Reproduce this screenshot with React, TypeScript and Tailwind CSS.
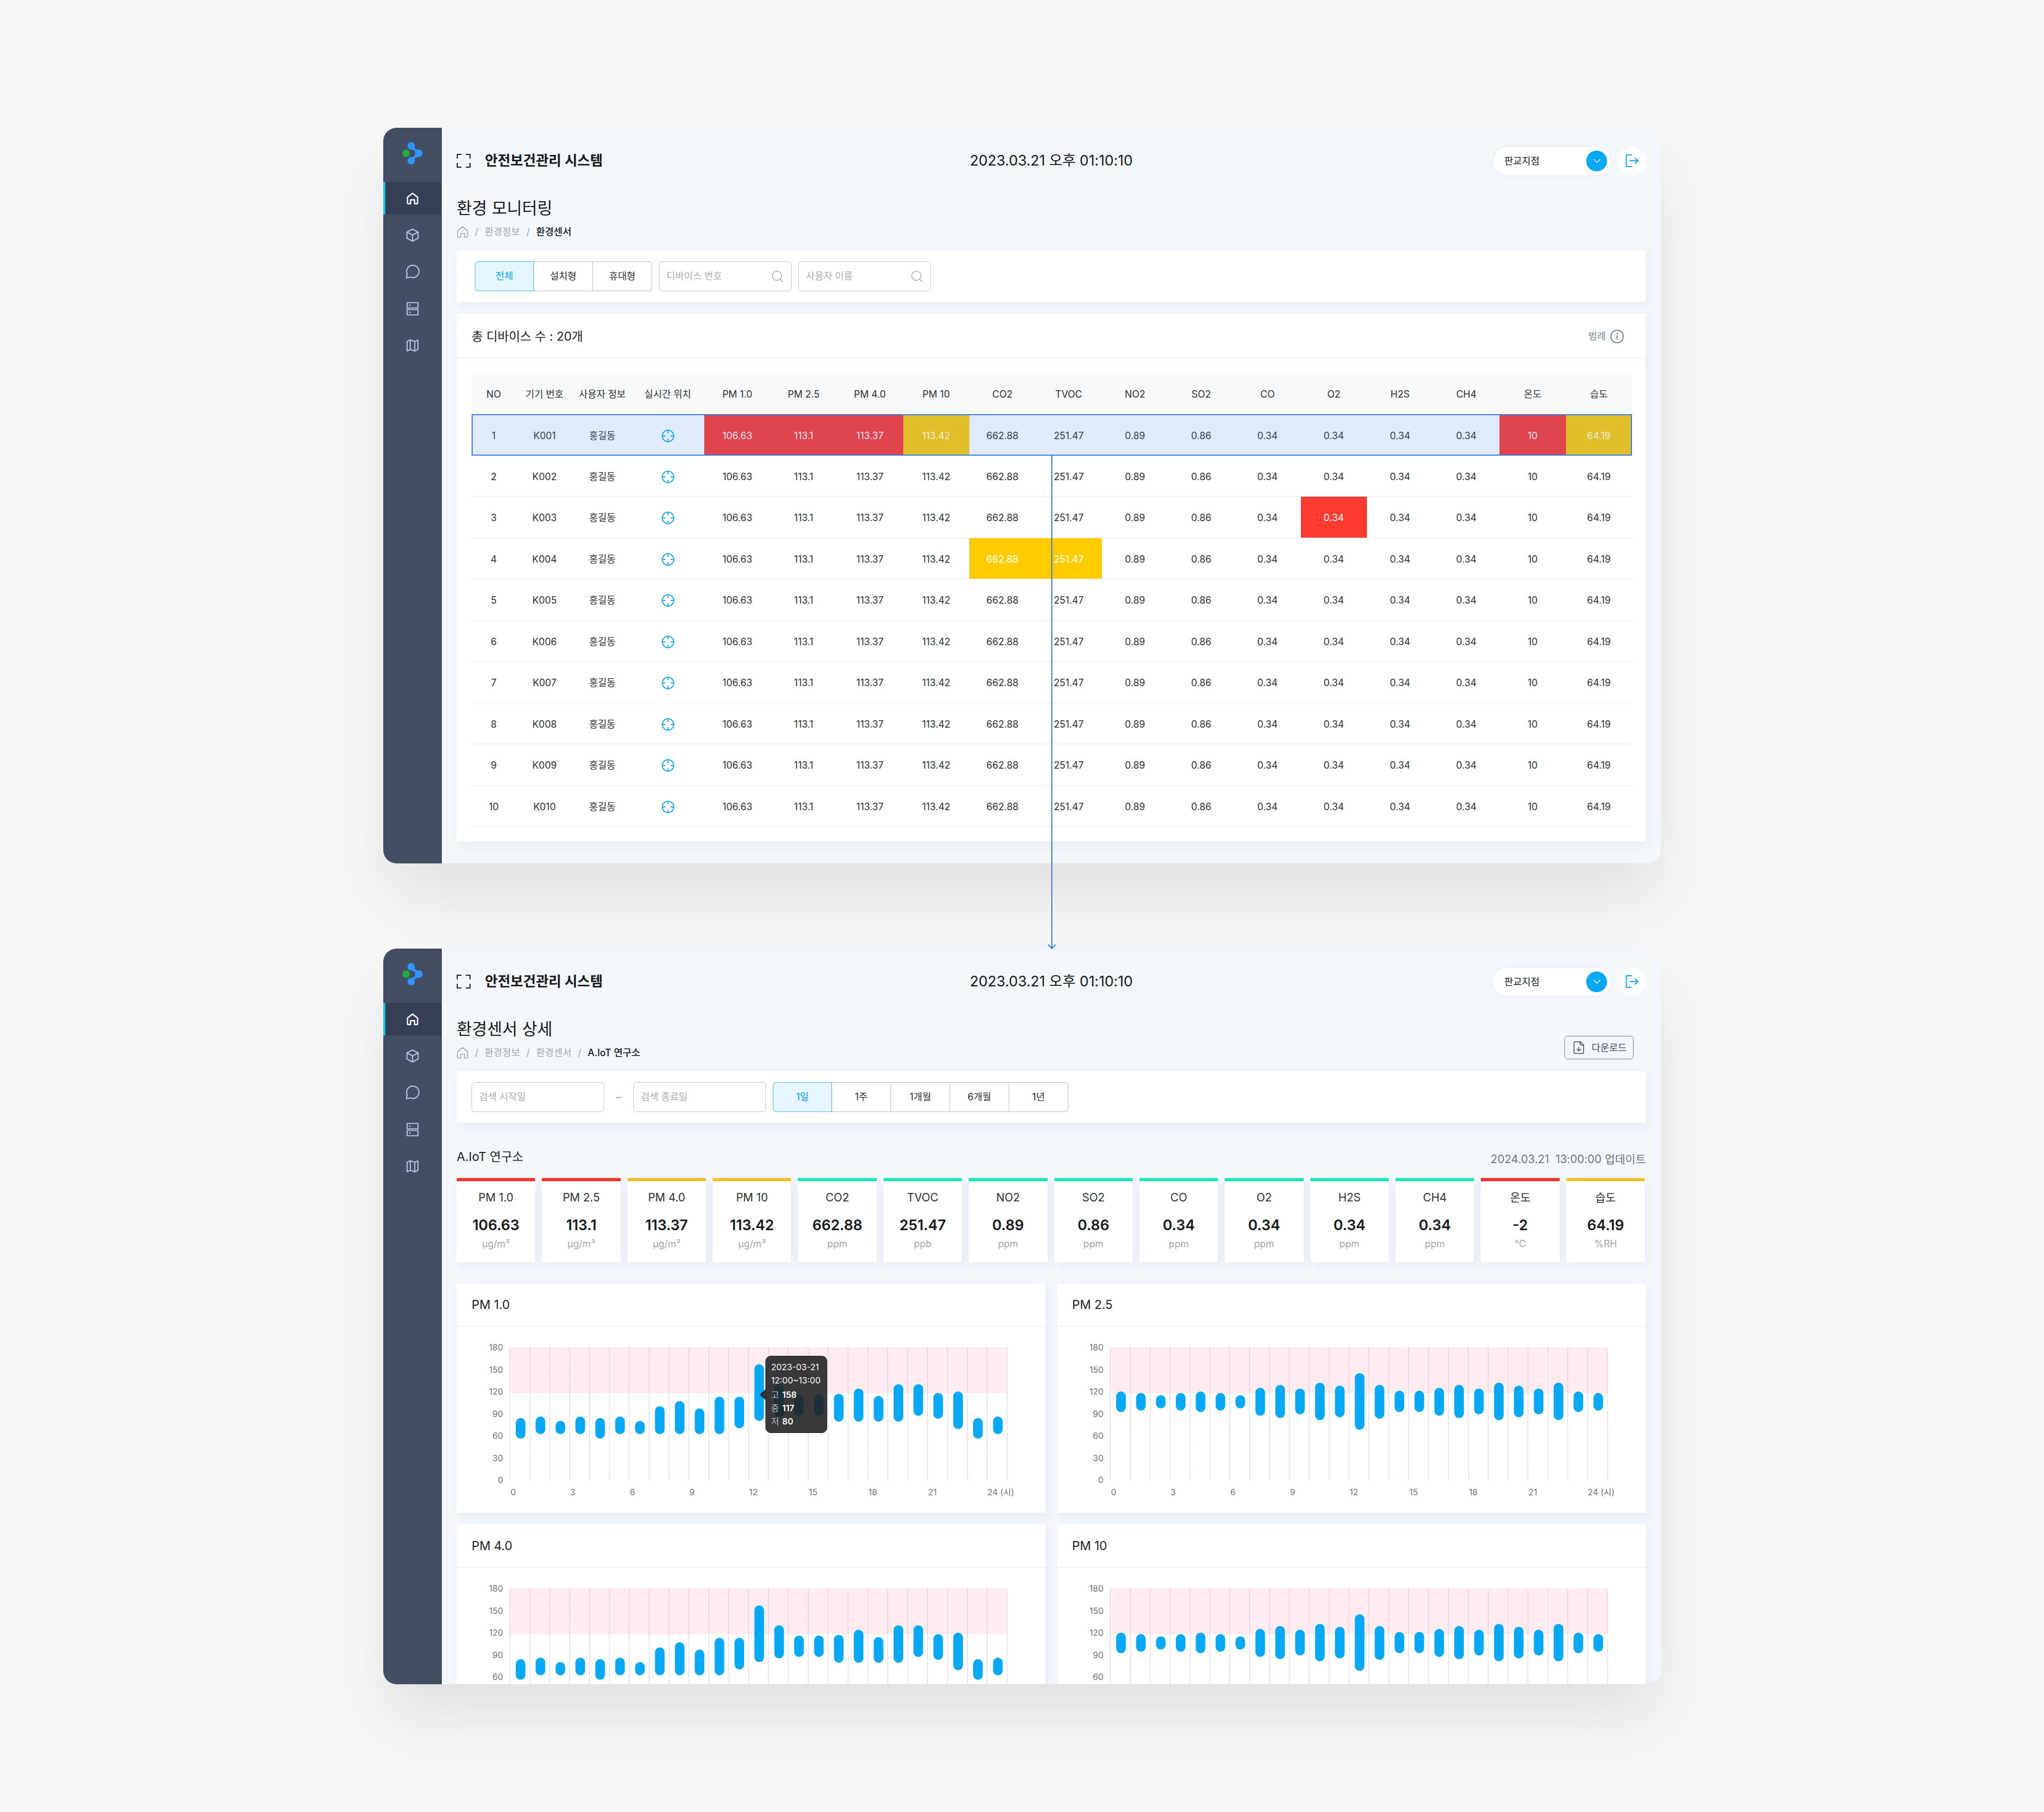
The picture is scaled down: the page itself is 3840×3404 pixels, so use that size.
import type { ReactNode } from 'react';

type Level = 'danger' | 'warn' | 'ok';

const columns = [
  'NO', '기기 번호', '사용자 정보', '실시간 위치', 'PM 1.0', 'PM 2.5', 'PM 4.0', 'PM 10', 'CO2',
  'TVOC', 'NO2', 'SO2', 'CO', 'O2', 'H2S', 'CH4', '온도', '습도',
];

const readings = [
  '106.63', '113.1', '113.37', '113.42', '662.88', '251.47', '0.89', '0.86', '0.34',
  '0.34', '0.34', '0.34', '10', '64.19',
];

const devices = Array.from({ length: 10 }, (_, i) => ({
  no: i + 1,
  id: `K${String(i + 1).padStart(3, '0')}`,
  user: '홍길동',
}));

// Alarm levels keyed by device number, then by index in `readings`.
const alarms: Record<number, Record<number, Level>> = {
  1: { 0: 'danger', 1: 'danger', 2: 'danger', 3: 'warn', 12: 'danger', 13: 'warn' },
  3: { 9: 'danger' },
  4: { 4: 'warn', 5: 'warn' },
};

const sensors: { name: string; value: string; unit: string; level: Level }[] = [
  { name: 'PM 1.0', value: '106.63', unit: 'μg/m³', level: 'danger' },
  { name: 'PM 2.5', value: '113.1', unit: 'μg/m³', level: 'danger' },
  { name: 'PM 4.0', value: '113.37', unit: 'μg/m³', level: 'warn' },
  { name: 'PM 10', value: '113.42', unit: 'μg/m³', level: 'warn' },
  { name: 'CO2', value: '662.88', unit: 'ppm', level: 'ok' },
  { name: 'TVOC', value: '251.47', unit: 'ppb', level: 'ok' },
  { name: 'NO2', value: '0.89', unit: 'ppm', level: 'ok' },
  { name: 'SO2', value: '0.86', unit: 'ppm', level: 'ok' },
  { name: 'CO', value: '0.34', unit: 'ppm', level: 'ok' },
  { name: 'O2', value: '0.34', unit: 'ppm', level: 'ok' },
  { name: 'H2S', value: '0.34', unit: 'ppm', level: 'ok' },
  { name: 'CH4', value: '0.34', unit: 'ppm', level: 'ok' },
  { name: '온도', value: '-2', unit: '℃', level: 'danger' },
  { name: '습도', value: '64.19', unit: '%RH', level: 'warn' },
];

const levelBar: Record<Level, string> = {
  danger: 'border-[#ff3229]',
  warn: 'border-[#f4bf25]',
  ok: 'border-[#17e9b4]',
};

// [high, low] per hour.
const seriesA: [number, number][] = [
  [84, 56], [86, 62], [80, 62], [86, 62], [84, 56], [86, 62], [80, 62], [100, 62], [107, 62],
  [97, 62], [113, 62], [113, 70], [157, 80], [130, 85], [116, 87], [116, 87], [117, 79], [124, 79],
  [114, 79], [130, 79], [130, 87], [118, 83], [120, 69], [84, 56], [86, 62],
];
const seriesB: [number, number][] = [
  [120, 92], [118, 94], [115, 97], [118, 94], [120, 92], [118, 94], [115, 97], [125, 87], [129, 84],
  [124, 89], [132, 81], [128, 85], [145, 68], [129, 83], [121, 92], [121, 92], [125, 87], [129, 84],
  [124, 89], [132, 81], [128, 85], [124, 89], [132, 81], [120, 92], [118, 94],
];

const PLOT_HEIGHT = 249;
const toY = (v: number) => ((180 - v) / 180) * PLOT_HEIGHT;

function Logo() {
  return (
    <svg className="h-11 w-11" viewBox="0 0 44 44" aria-hidden="true">
      <g fill="#3096fb">
        <circle cx="19.5" cy="8" r="7" />
        <circle cx="34" cy="22" r="7" />
        <circle cx="19.5" cy="36" r="7" />
        <path d="M26 10.5C27 14.5 30 15 34 15V29C30 29 27 29.5 26 33.500L17 29.500C23 29.500 27.200 27 27.200 22C27.200 17 23 14.500 17 14.500Z" />
      </g>
      <circle cx="10" cy="22" r="7" fill="#22ad3a" />
    </svg>
  );
}

function HomeIcon({ className, strokeWidth = 2.4 }: { className: string; strokeWidth?: number }) {
  return (
    <svg className={className} viewBox="0 0 30 30" fill="none" stroke="currentColor" strokeWidth={strokeWidth} strokeLinejoin="round" aria-hidden="true">
      <path d="M5.500 12.500 15 5l9.500 7.500v11a1.300 1.300 0 0 1-1.300 1.300h-4.400v-7.300h-7.600v7.300H6.800a1.300 1.300 0 0 1-1.300-1.300Z" />
    </svg>
  );
}

function NavIcon({ children }: { children: ReactNode }) {
  return (
    <svg className="h-[30px] w-[30px]" viewBox="0 0 30 30" fill="none" stroke="currentColor" strokeWidth="2.2" strokeLinejoin="round" strokeLinecap="round" aria-hidden="true">
      {children}
    </svg>
  );
}

const nav: { label: string; icon: ReactNode }[] = [
  { label: '홈', icon: <HomeIcon className="h-[30px] w-[30px]" /> },
  {
    label: '디바이스',
    icon: (
      <NavIcon>
        <path d="M15 3.500 25.500 9v11.500L15 26 4.500 20.500V9ZM4.500 9 15 14.500 25.500 9M15 14.500V26" />
      </NavIcon>
    ),
  },
  {
    label: '메시지',
    icon: (
      <NavIcon>
        <path d="M3.500 26 5 18.800A11.600 11.600 0 1 1 11 24.600Z" />
      </NavIcon>
    ),
  },
  {
    label: '서버',
    icon: (
      <NavIcon>
        <path d="M4.800 3.500h20.500v10H4.800ZM4.800 16.500h20.500v10H4.800Z" />
        <circle cx="9.800" cy="8.500" r="1.500" fill="currentColor" stroke="none" />
        <circle cx="9.800" cy="21.500" r="1.500" fill="currentColor" stroke="none" />
      </NavIcon>
    ),
  },
  {
    label: '지도',
    icon: (
      <NavIcon>
        <path d="M4.800 7.200 10.800 4.500 19.200 7.500 25.200 4.800V22.500L19.200 25.400 10.800 22.500 4.800 25.200ZM10.800 4.500v18M19.200 7.500v17.900" />
      </NavIcon>
    ),
  },
];

function Sidebar() {
  return (
    <nav className="flex w-[110px] shrink-0 flex-col border-r border-[#364058] bg-[#434e65]" aria-label="주 메뉴">
      <a href="#home" aria-label="홈으로" className="flex h-[102px] items-center justify-center pb-[6px]">
        <Logo />
      </a>
      <div className="flex flex-col gap-2">
        {nav.map((item, i) => (
          <a
            key={item.label}
            href="#menu"
            aria-label={item.label}
            className={
              i === 0
                ? 'flex h-[61px] items-center justify-center border-l-4 border-[#16c4ea] bg-[#353f55] pr-1 text-white'
                : 'flex h-[61px] items-center justify-center text-[#b3c0de]'
            }
          >
            {item.icon}
          </a>
        ))}
      </div>
    </nav>
  );
}

function TopBar() {
  return (
    <header className="grid h-[54px] grid-cols-[1fr_auto_1fr] items-center">
      <div className="flex items-center gap-[27px]">
        <button type="button" aria-label="전체 화면">
          <svg className="h-[26px] w-[26px]" viewBox="0 0 26 26" fill="none" stroke="#1d1f23" strokeWidth="2" aria-hidden="true">
            <path d="M1 9V1h8M17 1h8v8M25 17v8h-8M9 25H1v-8" />
          </svg>
        </button>
        <span className="text-[26px] leading-9 font-bold text-[#16181c]">안전보건관리 시스템</span>
      </div>
      <time className="text-[27px] leading-9 text-[#16181c]">2023.03.21 오후 01:10:10</time>
      <div className="flex items-center justify-end gap-[13px]">
        <label className="relative flex h-[53px] w-[221px] items-center rounded-full bg-white shadow-[0_0_8px_rgba(40,60,110,0.06)]">
          <select aria-label="지점" className="h-full w-full appearance-none rounded-full bg-transparent pl-[21px] text-[18px] text-[#16181c]">
            <option>판교지점</option>
          </select>
          <span className="pointer-events-none absolute right-[7px] flex h-[39px] w-[39px] items-center justify-center rounded-full bg-[#03a9f4]">
            <svg className="h-2 w-[14px]" viewBox="0 0 14 8" fill="none" stroke="#fff" strokeWidth="1.400" aria-hidden="true">
              <path d="M.6.8 7 7.200 13.400.8" />
            </svg>
          </span>
        </label>
        <button type="button" aria-label="로그아웃" className="flex h-[53px] w-[53px] items-center justify-center rounded-full bg-white">
          <svg className="h-6 w-6" viewBox="0 0 24 24" fill="none" stroke="#0aa8f7" strokeWidth="2" aria-hidden="true">
            <path d="M11.500 1H1.500v22h10M7.500 12h15M17.500 6.500 23 12l-5.500 5.500" />
          </svg>
        </button>
      </div>
    </header>
  );
}

function PageTitle({ title, trail, current, action }: { title: string; trail: string[]; current: string; action?: ReactNode }) {
  return (
    <div className="mt-[42px] flex items-end justify-between">
      <div>
        <h1 className="text-[31px] leading-10 text-[#16181c]">{title}</h1>
        <nav aria-label="현재 위치" className="mt-[13px] flex h-6 items-center gap-3 text-[18px] leading-6 text-[#a3a6ac]">
          <a href="#home" aria-label="홈">
            <HomeIcon className="-mx-1 h-[30px] w-[30px]" strokeWidth={1.6} />
          </a>
          {trail.map((t) => (
            <span key={t} className="flex gap-3">
              <span>/</span>
              <a href="#trail">{t}</a>
            </span>
          ))}
          <span>/</span>
          <span className="font-medium text-[#16181c]">{current}</span>
        </nav>
      </div>
      {action}
    </div>
  );
}

function Segmented({ label, options }: { label: string; options: string[] }) {
  return (
    <div role="group" aria-label={label} className="flex h-14">
      {options.map((o, i) => (
        <button
          key={o}
          type="button"
          aria-pressed={i === 0}
          className={
            i === 0
              ? 'w-[111px] rounded-l-[6px] border border-[#45b6f3] bg-[#e5f6fe] text-[18px] text-[#03a0ee]'
              : 'w-[111px] border-y border-r border-[#b9bcc1] text-[18px] text-[#2c2f34] last:rounded-r-[6px]'
          }
        >
          {o}
        </button>
      ))}
    </div>
  );
}

function TextField({ placeholder, search }: { placeholder: string; search?: boolean }) {
  return (
    <label className="relative flex h-14 w-[249px] items-center">
      <input
        type="text"
        aria-label={placeholder}
        placeholder={placeholder}
        className="h-full w-full rounded-[6px] border border-[#c3c5c9] bg-white px-[13px] text-[18px] text-[#2c2f34] placeholder:text-[#a9acb2]"
      />
      {search && (
        <svg className="pointer-events-none absolute right-[14px] h-6 w-6" viewBox="0 0 24 24" fill="none" stroke="#9b9ea4" strokeWidth="1.300" aria-hidden="true">
          <circle cx="10.500" cy="11" r="8.700" />
          <path d="m16.500 17.500 5.500 5" />
        </svg>
      )}
    </label>
  );
}

function Shell({ children, className }: { children: ReactNode; className?: string }) {
  return (
    <section className={`flex overflow-hidden rounded-[25px] bg-[#f4f7fc] shadow-[0_70px_120px_rgba(0,0,0,0.095)] ${className ?? ''}`}>
      <Sidebar />
      <div className="min-w-0 flex-1 px-7 pt-[35px] pb-[41px]">
        <TopBar />
        {children}
      </div>
    </section>
  );
}

function TargetIcon() {
  return (
    <svg className="mx-auto h-6 w-6" viewBox="0 0 24 24" fill="none" stroke="#0fa5f3" strokeWidth="1.800" role="img" aria-label="위치 보기">
      <circle cx="12" cy="12" r="10.800" />
      <path d="M12 1.200V7M12 17v5.800M1.200 12H7M17 12h5.800" />
    </svg>
  );
}

function cellTone(level: Level | undefined, selected: boolean) {
  if (level === 'danger') return selected ? 'bg-[#e0454e] text-[#efe3ee]' : 'bg-[#ff3b30] text-white';
  if (level === 'warn') return selected ? 'bg-[#dfbe29] text-[#eeedda]' : 'bg-[#ffcc00] text-white';
  return '';
}

function DeviceTable() {
  return (
    <table className="w-full table-fixed border-separate border-spacing-0 text-center text-[18px] leading-6 text-[#2f3237] [&_td]:pt-[3px] [&_th]:pt-[2px]">
      <colgroup>
        <col className="w-[83px]" />
        <col className="w-[108px]" />
        <col className="w-[109px]" />
        <col className="w-[137px]" />
      </colgroup>
      <thead>
        <tr className="h-[77px] bg-[#f8f9fb]">
          {columns.map((c) => (
            <th key={c} scope="col" className="font-normal whitespace-nowrap">{c}</th>
          ))}
        </tr>
      </thead>
      <tbody>
        {devices.map((d) => {
          const selected = d.no === 1;
          return (
            <tr
              key={d.no}
              className={
                selected
                  ? 'h-[78px] bg-[#dfeafb] text-[#333f55] outline-2 -outline-offset-2 outline-[#347ee9]'
                  : 'h-[78px] even:h-[77px] [&>td]:border-b [&>td]:border-[#e6e7e9]'
              }
            >
              <td>{d.no}</td>
              <td>{d.id}</td>
              <td>{d.user}</td>
              <td><TargetIcon /></td>
              {readings.map((r, i) => (
                <td key={i} className={cellTone(alarms[d.no]?.[i], selected)}>{r}</td>
              ))}
            </tr>
          );
        })}
      </tbody>
    </table>
  );
}

function Tooltip() {
  return (
    <div className="absolute top-4 left-[calc(52%-6px)] w-[116px] rounded-[10px] border border-[#232325] bg-[#1e1e20]/88 py-2 pl-[10px] text-[16px] leading-[25px] text-white">
      <svg className="absolute top-[61px] -left-3 h-[22px] w-3" viewBox="0 0 12 22" aria-hidden="true">
        <path d="M12 0v22L0 11Z" fill="#1e1e20" fillOpacity=".88" />
      </svg>
      <div>2023-03-21</div>
      <div>12:00~13:00</div>
      <dl className="mt-[2px] grid grid-cols-[auto_1fr] gap-x-[6px]">
        <dt className="text-[#c3c4c7]">고</dt>
        <dd className="font-semibold">158</dd>
        <dt className="text-[#c3c4c7]">중</dt>
        <dd className="font-semibold">117</dd>
        <dt className="text-[#c3c4c7]">저</dt>
        <dd className="font-semibold">80</dd>
      </dl>
    </div>
  );
}

function ChartCard({ title, data, tooltip }: { title: string; data: [number, number][]; tooltip?: boolean }) {
  return (
    <article className="bg-white shadow-[6px_6px_20px_rgba(40,60,90,0.06)]">
      <h3 className="flex h-[81px] items-center border-b border-[#e8e9eb] px-7 text-[23px] leading-8 font-normal text-[#1f2125]">{title}</h3>
      <div className="flex gap-[13px] pt-[29px] pr-[72px] pb-[29px] pl-7 text-[16px] leading-5 text-[#6f737a]">
        <div className="flex h-[269px] w-[59px] flex-col justify-between text-right">
          {[180, 150, 120, 90, 60, 30, 0].map((v) => (
            <span key={v}>{v}</span>
          ))}
        </div>
        <div className="min-w-0 flex-1 pt-[10px]">
          <div className="relative">
            <svg className="block h-[249px] w-full overflow-visible" role="img" aria-label={`${title} 시간별 측정값`}>
              <rect width="100%" height="86" fill="#feecf0" />
              {Array.from({ length: 26 }, (_, i) => (
                <line key={i} x1={`${i * 4}%`} x2={`${i * 4}%`} y1="0" y2={PLOT_HEIGHT} stroke="#a9abae" strokeWidth="1" strokeDasharray="1 1" />
              ))}
              {data.map(([high, low], i) => (
                <svg key={i} x={`${i * 4}%`} overflow="visible">
                  <rect x="11" y={toY(high)} width="18" height={toY(low) - toY(high)} rx="9" fill="#03a9f7" />
                </svg>
              ))}
            </svg>
            {tooltip && <Tooltip />}
          </div>
          <div className="mt-[13px] flex">
            {[0, 3, 6, 9, 12, 15, 18, 21].map((h) => (
              <span key={h} className="w-[12%] shrink-0 pl-px">{h}</span>
            ))}
            <span className="w-[4%] shrink-0 whitespace-nowrap">24 (시)</span>
          </div>
        </div>
      </div>
    </article>
  );
}

function MonitoringWindow() {
  return (
    <Shell>
      <PageTitle title="환경 모니터링" trail={['환경정보']} current="환경센서" />
      <form className="mt-[22px] flex h-[97px] items-center gap-[13px] bg-white pl-[34px] shadow-[6px_6px_20px_rgba(40,60,90,0.06)]">
        <Segmented label="디바이스 유형" options={['전체', '설치형', '휴대형']} />
        <TextField placeholder="디바이스 번호" search />
        <TextField placeholder="사용자 이름" search />
      </form>
      <div className="mt-[22px] bg-white shadow-[6px_6px_20px_rgba(40,60,90,0.06)]">
        <div className="flex h-[84px] items-center justify-between border-b border-[#e8e9eb] pt-[2px] pr-[41px] pl-7">
          <h2 className="text-[23px] leading-8 text-[#1f2125]">총 디바이스 수 : 20개</h2>
          <button type="button" className="flex items-center gap-[8px] text-[18px] text-[#768993]">
            범례
            <svg className="h-[26px] w-[26px]" viewBox="0 0 26 26" fill="none" stroke="#60757f" strokeWidth="1.800" aria-hidden="true">
              <circle cx="13" cy="13" r="11.700" />
              <path d="M13 11.500v7" />
              <circle cx="13" cy="8" r="1.400" fill="#60757f" stroke="none" />
            </svg>
          </button>
        </div>
        <div className="py-7 pr-[26px] pl-7">
          <DeviceTable />
        </div>
      </div>
    </Shell>
  );
}

function DetailWindow() {
  return (
    <Shell className="h-[1382px]">
      <PageTitle
        title="환경센서 상세"
        trail={['환경정보', '환경센서']}
        current="A.IoT 연구소"
        action={
          <button type="button" className="mr-[23px] flex h-11 w-[130px] items-center justify-center gap-[14px] rounded-[6px] border border-[#78839b] pl-1 text-[18px] text-[#3f4b68]">
            <svg className="h-6 w-5" viewBox="0 0 20 24" fill="none" stroke="currentColor" strokeWidth="1.500" strokeLinejoin="round" aria-hidden="true">
              <path d="M3 1h10l6 6v14a2 2 0 0 1-2 2H3a2 2 0 0 1-2-2V3a2 2 0 0 1 2-2ZM12.500 1v4.500a1.500 1.500 0 0 0 1.500 1.500h5M10 10.500V18M6 14.500l4 3.800 4-3.800" />
            </svg>
            다운로드
          </button>
        }
      />
      <form className="mt-[22px] flex h-[97px] items-center bg-white pl-7 shadow-[6px_6px_20px_rgba(40,60,90,0.06)]">
        <TextField placeholder="검색 시작일" />
        <span className="w-[55px] text-center text-[18px] text-[#a3a6ac]">~</span>
        <TextField placeholder="검색 종료일" />
        <div className="ml-[13px]">
          <Segmented label="조회 기간" options={['1일', '1주', '1개월', '6개월', '1년']} />
        </div>
      </form>
      <div className="mt-12 flex h-[37px] justify-between">
        <h2 className="self-start text-[23px] leading-8 text-[#1f2125]">A.IoT 연구소</h2>
        <p className="self-end text-[21px] leading-8 whitespace-pre text-[#74777d]">{'2024.03.21  13:00:00 업데이트'}</p>
      </div>
      <ul className="mt-[19px] mr-[2px] grid grid-cols-14 gap-[13px] text-center">
        {sensors.map((s) => (
          <li key={s.name} className={`border-t-[6px] bg-white pt-[17px] pb-[22px] shadow-[6px_6px_20px_rgba(40,60,90,0.06)] ${levelBar[s.level]}`}>
            <div className="text-[21px] leading-7 text-[#2f3237]">{s.name}</div>
            <div className="mt-5 text-[27px] leading-9 font-semibold text-[#16181c]">{s.value}</div>
            <div className="mt-[5px] text-[18px] leading-6 text-[#a3a6ac]">{s.unit}</div>
          </li>
        ))}
      </ul>
      <div className="mt-10 grid grid-cols-2 gap-[22px]">
        <ChartCard title="PM 1.0" data={seriesA} tooltip />
        <ChartCard title="PM 2.5" data={seriesB} />
        <ChartCard title="PM 4.0" data={seriesA} />
        <ChartCard title="PM 10" data={seriesB} />
      </div>
    </Shell>
  );
}

// Arrow from the selected row down to the detail window, centred on the content area.
function Connector() {
  return (
    <div className="pointer-events-none absolute top-[616px] -bottom-[161px] left-[calc(50%+55px)] z-10 w-[2px] bg-[#347ee9]">
      <svg className="absolute bottom-0 -left-[7px] h-[10px] w-4" viewBox="0 0 16 10" fill="none" stroke="#347ee9" strokeWidth="2" strokeLinecap="round" strokeLinejoin="round" aria-hidden="true">
        <path d="M1.500 2 8 8.800 14.500 2" />
      </svg>
    </div>
  );
}

export default function App() {
  return (
    <main className="bg-[#f8f8f8] py-60 font-['Inter','Noto_Sans_CJK_KR',sans-serif]">
      <div className="mx-auto flex w-[62.5%] flex-col gap-40">
        <div className="relative">
          <MonitoringWindow />
          <Connector />
        </div>
        <DetailWindow />
      </div>
    </main>
  );
}
